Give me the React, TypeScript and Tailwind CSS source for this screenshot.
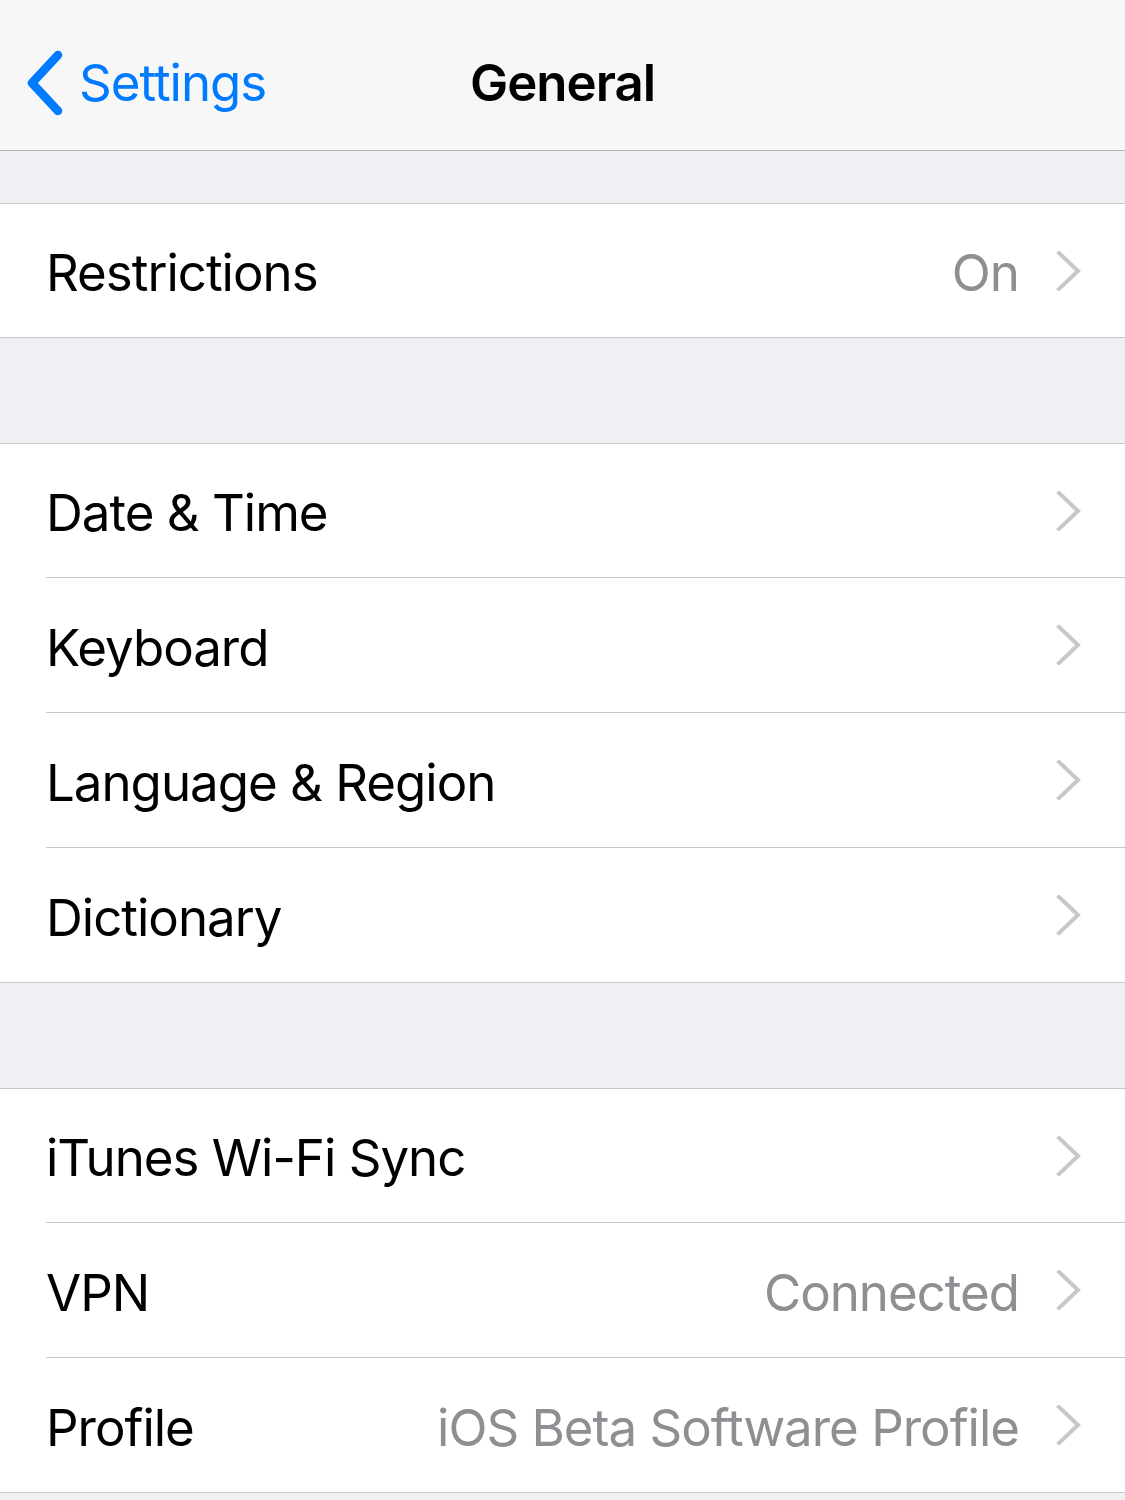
import React from "react";

type Row = { label: string; value?: string };

const groups: Row[][] = [
  [{ label: "Restrictions", value: "On" }],
  [
    { label: "Date & Time" },
    { label: "Keyboard" },
    { label: "Language & Region" },
    { label: "Dictionary" },
  ],
  [
    { label: "iTunes Wi-Fi Sync" },
    { label: "VPN", value: "Connected" },
    { label: "Profile", value: "iOS Beta Software Profile" },
  ],
];

function Chevron() {
  return (
    <svg width="26" height="40" viewBox="0 0 26 40" className="shrink-0">
      <path d="M3 2 L22 20 L3 38" fill="none" stroke="#c7c7cc" strokeWidth="4" strokeLinecap="square" />
    </svg>
  );
}

function BackChevron() {
  return (
    <svg width="40" height="66" viewBox="0 0 40 66" className="shrink-0">
      <path d="M32 5 L6 33 L32 61" fill="none" stroke="#007aff" strokeWidth="8.5" strokeLinecap="round" strokeLinejoin="round" />
    </svg>
  );
}

// rows are ~134.7px apart in the shot, so first/last rows are a pixel shorter
function rowHeight(first: boolean, last: boolean) {
  if (first && last) return "h-[133px]";
  if (first || last) return "h-[134px]";
  return "h-[135px]";
}

function SettingsRow({ row, first, last }: { row: Row; first: boolean; last: boolean }) {
  return (
    <div className="pl-[46px] bg-white">
      <div
        className={
          rowHeight(first, last) +
          " flex items-center pr-[43px] " +
          (last ? "" : "border-b border-[#c8c7cc]")
        }
      >
        <span className="text-black flex-1 pt-[6px]">{row.label}</span>
        {row.value && <span className="text-[#8e8e93] mr-[37px] pt-[6px]">{row.value}</span>}
        <Chevron />
      </div>
    </div>
  );
}

export default function App() {
  return (
    <div
      className="w-[1125px] h-[1500px] bg-[#efeff4] overflow-hidden text-[51px] tracking-[-1px]"
      style={{ fontFamily: "Inter, 'Noto Sans', sans-serif" }}
    >
      <div className="h-[151px] bg-[#f7f7f7] border-b border-[#b2b2b2] relative flex items-center">
        <div className="flex items-center pl-[26px] pt-[16px]">
          <BackChevron />
          <span className="text-[#007aff] ml-[13px]">Settings</span>
        </div>
        <div className="absolute inset-x-0 top-0 h-full flex items-center justify-center pt-[16px] pointer-events-none">
          <span className="font-semibold text-black">General</span>
        </div>
      </div>

      <div className="pt-[52px] flex flex-col gap-[105px]">
        {groups.map((g, gi) => (
          <div key={gi} className="border-y border-[#c8c7cc] bg-white">
            {g.map((r, i) => (
              <SettingsRow key={r.label} row={r} first={i === 0} last={i === g.length - 1} />
            ))}
          </div>
        ))}
      </div>
    </div>
  );
}
